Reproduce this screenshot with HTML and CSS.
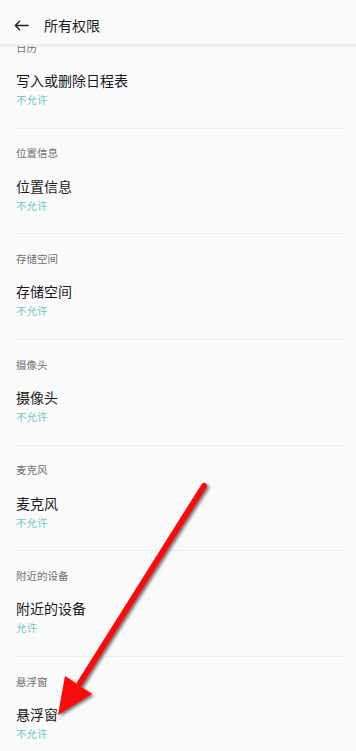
FILE: index.html
```html
<!DOCTYPE html>
<html lang="zh-CN">
<head>
<meta charset="utf-8">
<title>所有权限</title>
<link rel="stylesheet" href="styles.css">
</head>
<body>
<div class="screen">
  <header class="topbar">
    <svg class="back" width="15" height="11" viewBox="0 0 15 11">
      <path d="M14.2 5.5H1.4M5.6 1.2L1.3 5.5l4.3 4.3" fill="none" stroke="#222" stroke-width="1.4" stroke-linecap="round" stroke-linejoin="round"/>
    </svg>
    <h1 class="title">所有权限</h1>
  </header>
  <main class="viewport">
    <div class="list">
      <section class="perm">
        <div class="label">日历</div>
        <div class="name">写入或删除日程表</div>
        <div class="state">不允许</div>
      </section>
      <section class="perm">
        <div class="label">位置信息</div>
        <div class="name">位置信息</div>
        <div class="state">不允许</div>
      </section>
      <section class="perm">
        <div class="label">存储空间</div>
        <div class="name">存储空间</div>
        <div class="state">不允许</div>
      </section>
      <section class="perm">
        <div class="label">摄像头</div>
        <div class="name">摄像头</div>
        <div class="state">不允许</div>
      </section>
      <section class="perm">
        <div class="label">麦克风</div>
        <div class="name">麦克风</div>
        <div class="state">不允许</div>
      </section>
      <section class="perm">
        <div class="label">附近的设备</div>
        <div class="name">附近的设备</div>
        <div class="state">允许</div>
      </section>
      <section class="perm">
        <div class="label">悬浮窗</div>
        <div class="name">悬浮窗</div>
        <div class="state">不允许</div>
      </section>
    </div>
  </main>
  <svg class="arrow" width="356" height="751" viewBox="0 0 356 751">
    <defs>
      <filter id="sh" x="-20%" y="-20%" width="140%" height="140%">
        <feDropShadow dx="2" dy="1.5" stdDeviation="1.6" flood-color="#000" flood-opacity="0.55"/>
      </filter>
    </defs>
    <g filter="url(#sh)">
      <line x1="204" y1="486" x2="80" y2="683" stroke="#f50d0d" stroke-width="6" stroke-linecap="round"/>
      <polygon points="58,715 65,676 92,694" fill="#f50d0d"/>
    </g>
  </svg>
</div>
</body>
</html>
```

FILE: styles.css
```css
* { box-sizing: border-box; }
html, body {
  margin: 0;
  padding: 0;
  background: #fafafa;
}
body {
  font-family: "Noto Sans CJK SC", "Noto Sans", sans-serif;
  color: #1c1c1c;
}
.screen {
  position: relative;
  width: 356px;
  height: 751px;
  overflow: hidden;
  background: #fafafa;
}
.topbar {
  position: relative;
  z-index: 2;
  height: 46px;
  display: flex;
  align-items: center;
  padding: 6px 0 0 14px;
  background: #fafafa;
  border-bottom: 2px solid #ededed;
  box-shadow: 0 1px 1px rgba(0, 0, 0, 0.03);
}
.back {
  display: block;
  flex: none;
}
.title {
  margin: 0 0 0 15px;
  font-size: 14px;
  font-weight: 400;
  line-height: 20px;
  color: #1e1e1e;
}
.viewport {
  height: 705px;
  overflow: hidden;
}
.list {
  margin-top: -23px;
}
.perm {
  margin: 0 13px 0 16px;
  padding: 16.5px 0 20.7px;
  border-bottom: 1px solid #ececec;
}
.label {
  font-size: 10.5px;
  line-height: 16px;
  color: #707070;
}
.name {
  margin-top: 14.5px;
  font-size: 14px;
  line-height: 20px;
  color: #1a1a1a;
}
.state {
  margin-top: 2px;
  font-size: 10.5px;
  line-height: 15px;
  color: #74c6bb;
}
.arrow {
  position: absolute;
  left: 0;
  top: 0;
  z-index: 3;
  pointer-events: none;
}
```
